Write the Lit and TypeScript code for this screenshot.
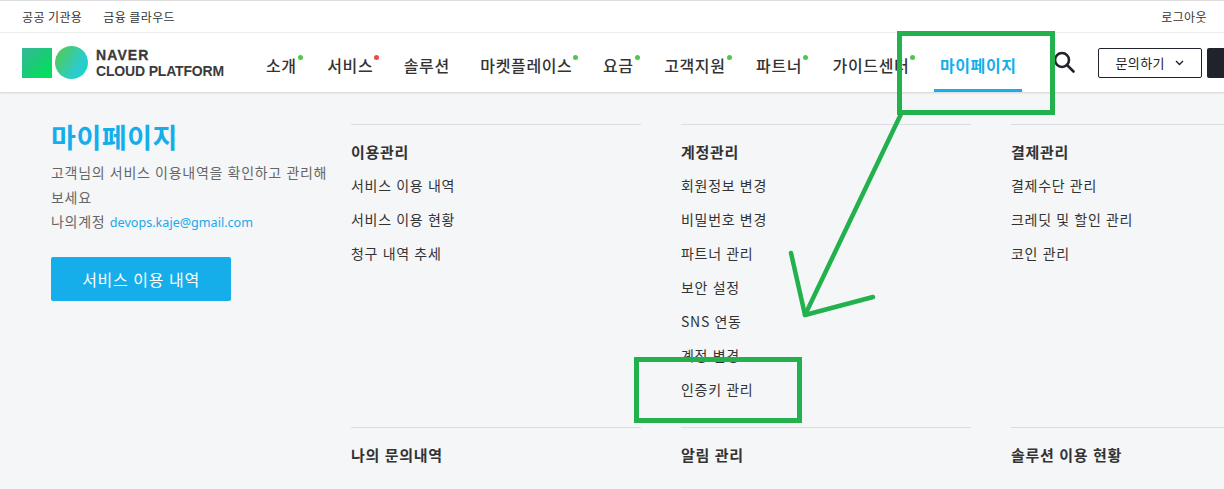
import { LitElement, html, css, svg } from 'lit'
import { customElement } from 'lit/decorators.js'

interface NavItem {
  readonly label: string
  readonly dot?: 'green' | 'red'
  readonly active?: boolean
}

interface MenuGroup {
  readonly title: string
  readonly links: ReadonlyArray<string>
}

const NAV_ITEMS: ReadonlyArray<NavItem> = [
  { label: '소개', dot: 'green' },
  { label: '서비스', dot: 'red' },
  { label: '솔루션' },
  { label: '마켓플레이스', dot: 'green' },
  { label: '요금', dot: 'green' },
  { label: '고객지원', dot: 'green' },
  { label: '파트너', dot: 'green' },
  { label: '가이드센터', dot: 'green' },
  { label: '마이페이지', active: true },
]

const TOP_GROUPS: ReadonlyArray<MenuGroup> = [
  { title: '이용관리', links: ['서비스 이용 내역', '서비스 이용 현황', '청구 내역 추세'] },
  {
    title: '계정관리',
    links: ['회원정보 변경', '비밀번호 변경', '파트너 관리', '보안 설정', 'SNS 연동', '계정 변경', '인증키 관리'],
  },
  { title: '결제관리', links: ['결제수단 관리', '크레딧 및 할인 관리', '코인 관리'] },
]

const BOTTOM_GROUPS: ReadonlyArray<MenuGroup> = [
  { title: '나의 문의내역', links: [] },
  { title: '알림 관리', links: [] },
  { title: '솔루션 이용 현황', links: [] },
]

@customElement('app-root')
export class AppRoot extends LitElement {
  static override styles = css`
    :host {
      display: block;
      position: relative;
      width: 1224px;
      height: 489px;
      overflow: hidden;
      background: #f5f6f8;
      color: #222;
      font-family: 'Noto Sans CJK KR', 'Noto Sans', sans-serif;
    }

    .util {
      display: flex;
      align-items: center;
      justify-content: space-between;
      height: 31px;
      padding: 0 17px 0 22px;
      background: #fff;
      border-top: 1px solid #ddd;
      border-bottom: 1px solid #eee;
      font-size: 12px;
      letter-spacing: 0.4px;
      color: #333;
    }

    .util-left {
      display: flex;
      gap: 21px;
    }

    .header {
      display: flex;
      align-items: center;
      height: 59px;
      padding-left: 22px;
      background: #fff;
      box-shadow: 0 1px 2px rgba(0, 0, 0, 0.15);
      position: relative;
    }

    .logo {
      display: flex;
      align-items: center;
      gap: 3px;
      width: 244px;
      flex-shrink: 0;
    }

    .logo-square {
      width: 30px;
      height: 30px;
      background: linear-gradient(135deg, #35b89a 0%, #1cc978 45%, #00e25a 90%);
    }

    .logo-circle {
      width: 33px;
      height: 33px;
      border-radius: 50%;
      background: linear-gradient(120deg, #4ccb62 15%, #2ccbd0 70%, #00e2b0 100%);
    }

    .logo-text {
      margin-left: 5px;
      font-family: 'Liberation Sans', Arial, sans-serif;
      font-size: 14px;
      line-height: 16px;
      color: #3a3a3a;
      white-space: nowrap;
    }

    .logo-text b {
      display: block;
      font-weight: 700;
      letter-spacing: 1.1px;
      -webkit-text-stroke: 0.3px #3a3a3a;
    }

    .logo-text span {
      display: block;
      font-weight: 700;
      letter-spacing: -0.17px;
    }

    .nav {
      display: flex;
      height: 100%;
    }

    .nav-item {
      position: relative;
      display: flex;
      align-items: center;
      height: 100%;
      padding-top: 5px;
      box-sizing: border-box;
      font-size: 16px;
      font-weight: 500;
      letter-spacing: 0.63px;
      color: #333;
      white-space: nowrap;
      margin-right: 30.5px;
    }

    .nav-item .dot {
      position: absolute;
      top: 22px;
      right: -6px;
      width: 5px;
      height: 5px;
      border-radius: 50%;
      background: #4fc74f;
    }

    .nav-item .dot.red {
      background: #f4473f;
    }

    .nav-item.active {
      color: #15aeea;
      font-weight: 700;
      margin-right: 0;
    }

    .nav-item.active::after {
      content: '';
      position: absolute;
      left: -6px;
      right: -5px;
      bottom: 0;
      height: 3px;
      background: #15aeea;
    }

    .search {
      display: block;
      width: 22px;
      height: 22px;
      margin: 0 0 2px 36px;
      flex-shrink: 0;
    }

    .ask {
      display: flex;
      align-items: center;
      justify-content: center;
      gap: 10px;
      box-sizing: border-box;
      width: 104px;
      height: 30px;
      margin-left: 23px;
      flex-shrink: 0;
      background: #fff;
      border: 1px solid #20232c;
      border-radius: 2px;
      font-size: 13px;
      letter-spacing: 0.3px;
      color: #222;
    }

    .dark-btn {
      width: 40px;
      height: 30px;
      margin-left: 5px;
      flex-shrink: 0;
      border-radius: 2px;
      background: #20232c;
    }

    .body {
      display: flex;
      padding: 32px 0 0 51px;
    }

    .intro {
      width: 300px;
      flex-shrink: 0;
    }

    .intro h2 {
      margin: 0;
      font-size: 27px;
      line-height: 26px;
      font-weight: 700;
      letter-spacing: 0.55px;
      color: #15aeea;
    }

    .intro p {
      margin: 10px 0 0;
      width: 280px;
      font-size: 14px;
      line-height: 24.5px;
      letter-spacing: 0.72px;
      word-spacing: 0.6px;
      color: #666;
      word-break: break-all;
    }

    .intro a {
      color: #1ba7ea;
      font-family: 'Noto Sans', sans-serif;
      font-size: 12.6px;
      letter-spacing: 0;
    }

    .cta {
      display: flex;
      align-items: center;
      justify-content: center;
      width: 180px;
      height: 44px;
      margin-top: 21.5px;
      border-radius: 2px;
      background: #15aeea;
      color: #fff;
      font-size: 16px;
      letter-spacing: 0.7px;
      word-spacing: 0.6px;
    }

    .groups {
      display: grid;
      grid-template-columns: repeat(3, 290px);
      grid-template-rows: 303px auto;
      column-gap: 40px;
      flex-shrink: 0;
    }

    .group {
      border-top: 1px solid #ddd;
      padding-top: 15px;
    }

    .group h3 {
      margin: 0 0 4px;
      font-size: 15px;
      line-height: 24px;
      font-weight: 700;
      letter-spacing: 0.7px;
      word-spacing: 0.6px;
      color: #333;
    }

    .group ul {
      list-style: none;
      margin: 0;
      padding: 0;
    }

    .group li {
      font-size: 14px;
      line-height: 34px;
      letter-spacing: 0.72px;
      word-spacing: 0.6px;
      color: #333;
      white-space: nowrap;
    }

    .marks {
      position: absolute;
      left: 0;
      top: 0;
      width: 1224px;
      height: 489px;
      pointer-events: none;
    }
  `

  private renderGroup(group: MenuGroup) {
    return html`
      <section class="group">
        <h3>${group.title}</h3>
        <ul>
          ${group.links.map(link => html`<li>${link}</li>`)}
        </ul>
      </section>
    `
  }

  private renderMarks() {
    return svg`
      <g fill="none" stroke="#22b14c" stroke-width="5">
        <rect x="899.5" y="33.5" width="153" height="79" />
        <rect x="636.5" y="359.5" width="163" height="61" />
      </g>
      <g fill="none" stroke="#22b14c" stroke-width="4.5" stroke-linecap="round" stroke-linejoin="round">
        <path d="M901 114 L805 315" />
        <path d="M791 253 L805 315 L873 297" />
      </g>
    `
  }

  override render() {
    return html`
      <div class="util">
        <div class="util-left">
          <span>공공 기관용</span>
          <span>금융 클라우드</span>
        </div>
        <span>로그아웃</span>
      </div>
      <header class="header">
        <div class="logo">
          <div class="logo-square"></div>
          <div class="logo-circle"></div>
          <div class="logo-text"><b>NAVER</b><span>CLOUD PLATFORM</span></div>
        </div>
        <nav class="nav">
          ${NAV_ITEMS.map(
            item => html`
              <div class="nav-item ${item.active ? 'active' : ''}">
                ${item.label}
                ${item.dot ? html`<i class="dot ${item.dot}"></i>` : ''}
              </div>
            `
          )}
        </nav>
        <svg class="search" viewBox="0 0 22 22" fill="none" stroke="#20232c" stroke-width="2.6">
          <circle cx="9" cy="9" r="7" />
          <path d="M14 14 L20.5 20.5" stroke-linecap="round" />
        </svg>
        <div class="ask">
          문의하기
          <svg width="9" height="6" viewBox="0 0 9 6" fill="none" stroke="#20232c" stroke-width="1.4">
            <path d="M1 1 L4.5 4.5 L8 1" />
          </svg>
        </div>
        <div class="dark-btn"></div>
      </header>
      <main class="body">
        <aside class="intro">
          <h2>마이페이지</h2>
          <p>
            고객님의 서비스 이용내역을 확인하고 관리해보세요<br />
            나의계정 <a>devops.kaje@gmail.com</a>
          </p>
          <div class="cta">서비스 이용 내역</div>
        </aside>
        <div class="groups">
          ${TOP_GROUPS.map(g => this.renderGroup(g))}
          ${BOTTOM_GROUPS.map(g => this.renderGroup(g))}
        </div>
      </main>
      <svg class="marks" viewBox="0 0 1224 489">${this.renderMarks()}</svg>
    `
  }
}

declare global {
  interface HTMLElementTagNameMap {
    'app-root': AppRoot
  }
}
